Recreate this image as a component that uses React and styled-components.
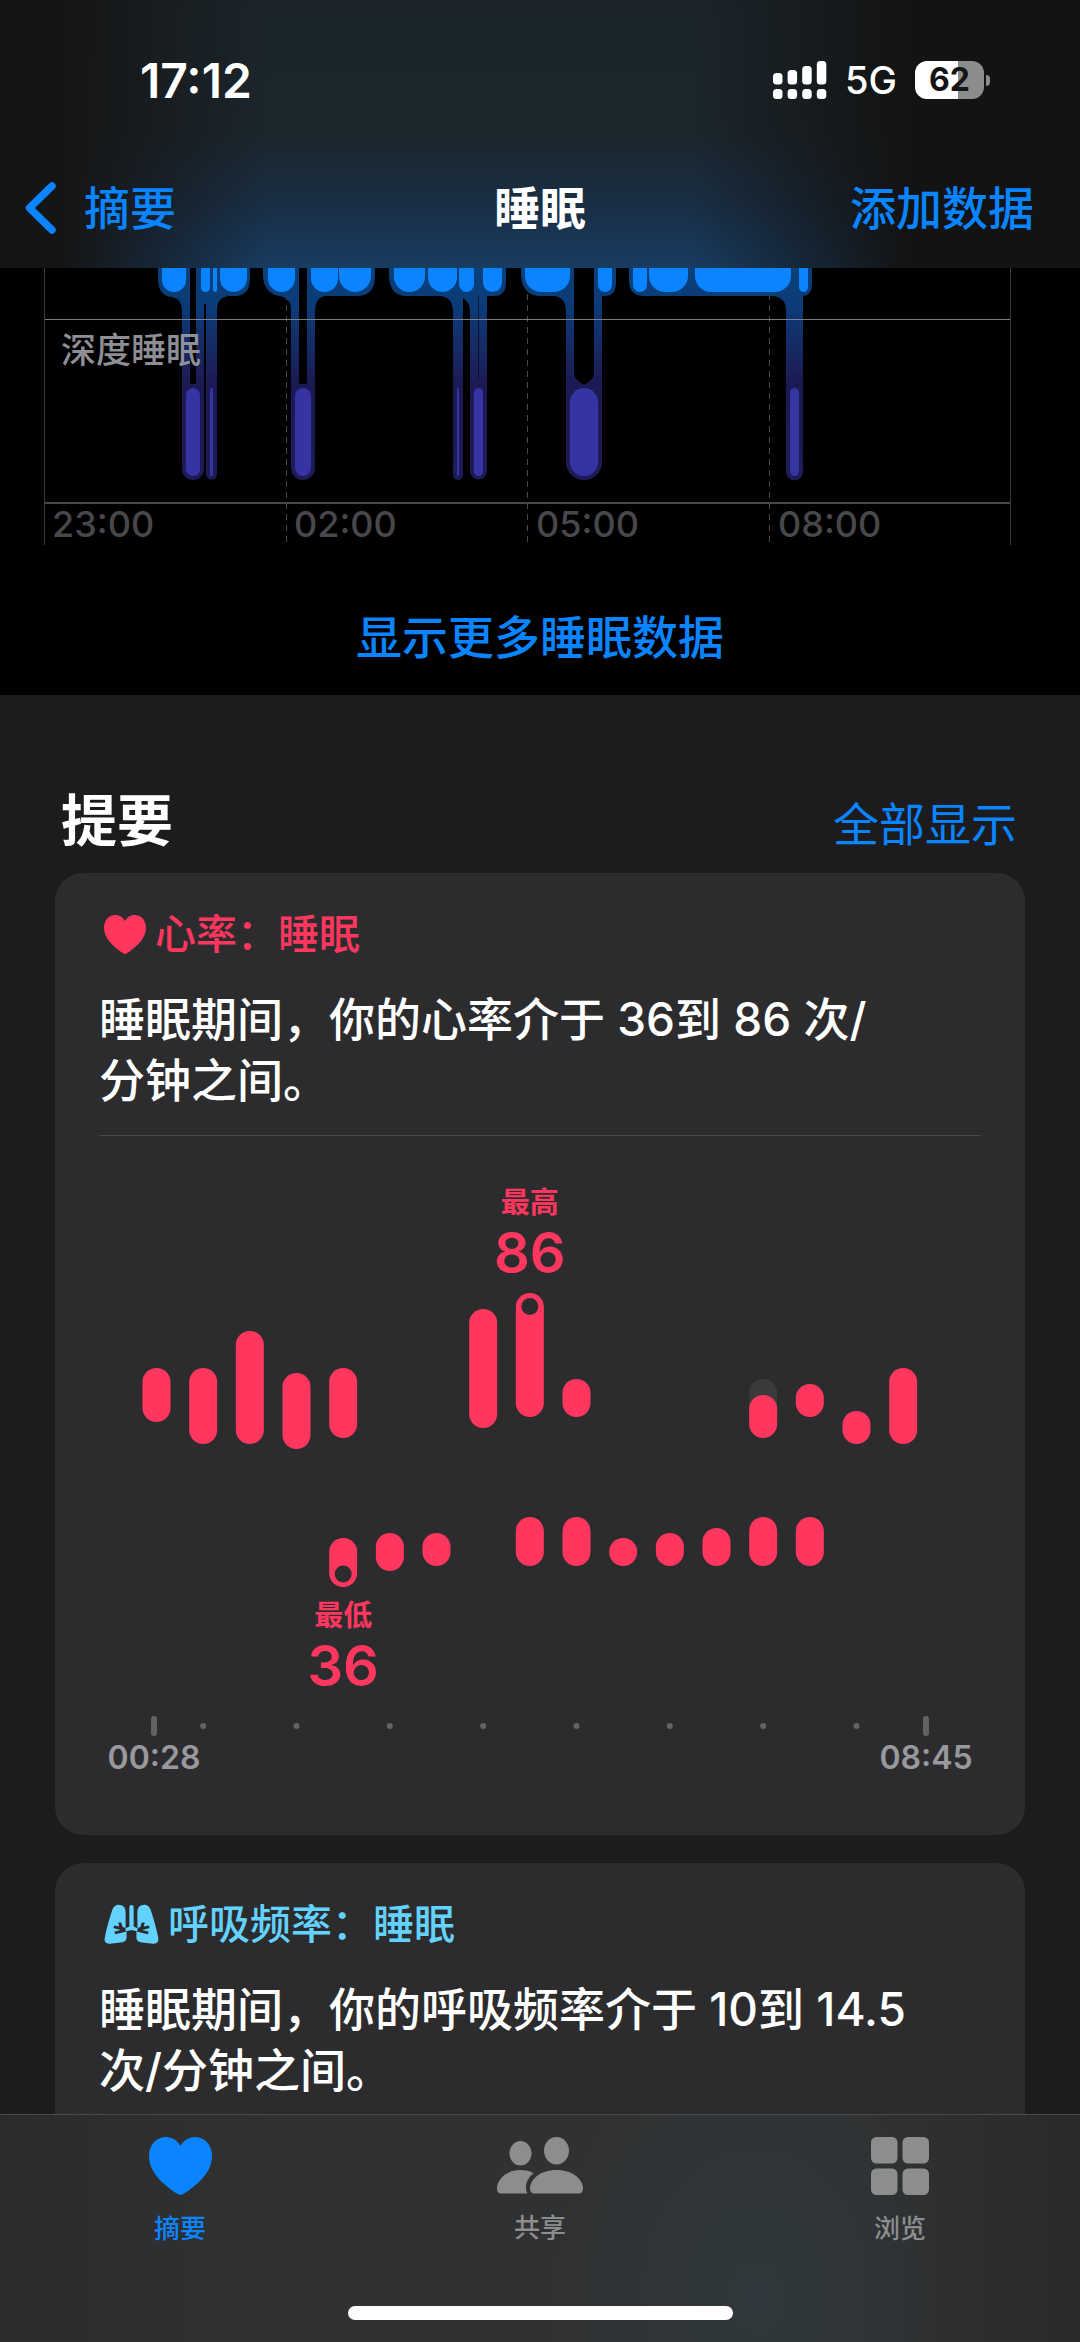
import React from "react";
import styled, { createGlobalStyle } from "styled-components";

const GlobalStyle = createGlobalStyle`
  :root {
    --blue: #0a84ff;
    --red: #ff375f;
    --cyan: #64d2ff;
    --sans: Inter, "Noto Sans CJK SC", sans-serif;
  }
  * {
    box-sizing: border-box;
  }
  body {
    margin: 0;
    background: #1c1c1e;
    color: #ffffff;
    font-family: var(--sans);
  }
  h1, h2, h3, p {
    margin: 0;
  }
  a {
    color: var(--blue);
    text-decoration: none;
  }
`;

const Screen = styled.div`
  min-height: 100vh;
  display: flex;
  flex-direction: column;
`;

/* top bars */

const Header = styled.header`
  background: linear-gradient(
      90deg,
      #141414 0%,
      #151515 6%,
      rgba(21, 21, 21, 0) 25%,
      rgba(20, 20, 20, 0) 64%,
      #131313 84%
    ),
    linear-gradient(180deg, #1b252b 0%, #1b262d 50%, #192e44 76%, #183c62 100%);
`;

const StatusBar = styled.div`
  height: 148px;
  padding: 12px 90px 0 140px;
  display: flex;
  align-items: center;
  justify-content: space-between;
`;

const Time = styled.span`
  font-size: 48px;
  font-weight: 600;
`;

const StatusIcons = styled.div`
  display: flex;
  align-items: center;
  gap: 18px;
  font-size: 38px;
  font-weight: 500;
`;

const Battery = styled.span`
  display: flex;
  align-items: center;
  gap: 2px;
  &::after {
    content: "";
    width: 4px;
    height: 11px;
    border-radius: 0 4px 4px 0;
    background: #8c8c8c;
  }
`;

const BatteryLevel = styled.span`
  width: 69px;
  height: 38px;
  border-radius: 12px;
  background: linear-gradient(90deg, #ffffff 62%, #8c8c8c 62%);
  color: #141414;
  font-size: 32px;
  line-height: 38px;
  font-weight: 700;
  text-align: center;
`;

const NavBar = styled.nav`
  height: 120px;
  padding: 0 24px;
  display: grid;
  grid-template-columns: 1fr auto 1fr;
  align-items: center;
  font-size: 46px;
  line-height: 60px;
  font-weight: 500;
`;

const BackLink = styled.a`
  display: flex;
  align-items: center;
  gap: 26px;
`;

const NavTitle = styled.h1`
  font-size: 46px;
  font-weight: 700;
`;

const NavAction = styled.a`
  justify-self: end;
  padding-right: 22px;
`;

/* sleep stages */

const SleepSection = styled.section`
  background: #000000;
  display: flex;
  flex-direction: column;
  align-items: center;
`;

const ChartSvg = styled.svg`
  display: block;
  width: 100%;
  height: auto;
  font-family: var(--sans);
`;

const MoreLink = styled.a`
  font-size: 46px;
  line-height: 60px;
  font-weight: 500;
  padding: 59px 0 28px;
`;

/* highlights */

const Highlights = styled.main`
  flex: 1;
  display: flex;
  flex-direction: column;
  gap: 28px;
  padding: 92px 55px 0;
`;

const SectionHead = styled.div`
  display: flex;
  align-items: baseline;
  justify-content: space-between;
  padding: 0 8px 0 6px;
  margin-bottom: -13px;
  line-height: 68px;
  h2 {
    font-size: 56px;
    font-weight: 700;
  }
  a {
    font-size: 46px;
  }
`;

const Card = styled.article`
  background: #2c2c2e;
  border-radius: ${(props) => (props.$open ? "28px 28px 0 0" : "28px")};
  flex-grow: ${(props) => (props.$open ? 1 : 0)};
  padding: 36px 44px 0;
`;

const CardTitle = styled.h3`
  display: flex;
  align-items: center;
  gap: 9px;
  padding-left: 5px;
  color: ${(props) => props.$color};
  font-size: 41px;
  line-height: 50px;
  font-weight: 500;
`;

const CardText = styled.p`
  margin-top: 30px;
  font-size: 46px;
  line-height: 61px;
  font-weight: 500;
`;

const Rule = styled.hr`
  border: 0;
  height: 1px;
  margin: 24px 0 0;
  background: #48484a;
`;

/* bottom tabs */

const TabBar = styled.footer`
  border-top: 1px solid #46484a;
  background: radial-gradient(
      ellipse 200px 260px at 70% 80%,
      #2f383c 0%,
      rgba(48, 49, 51, 0) 100%
    ),
    linear-gradient(90deg, #2b2b2b 0%, #303132 25%, #303132 80%, #2a2a2a 100%);
  display: flex;
  flex-direction: column;
  align-items: center;
  gap: 59px;
  padding: 22px 0;
`;

const Tabs = styled.nav`
  width: 100%;
  display: grid;
  grid-template-columns: repeat(3, 1fr);
`;

const Tab = styled.a`
  display: flex;
  flex-direction: column;
  align-items: center;
  gap: 16px;
  color: ${(props) => (props.$active ? "var(--blue)" : "#8c8d8d")};
  font-size: 26px;
  line-height: 36px;
  font-weight: 500;
`;

const HomeIndicator = styled.div`
  width: 385px;
  height: 14px;
  border-radius: 7px;
  background: #ffffff;
`;

/* icons */

function SignalIcon() {
  const bars = [12, 9, 5, 0];
  return (
    <svg width="54" height="38" viewBox="0 0 54 38" fill="#fff" aria-hidden="true">
      {bars.map((top, i) => (
        <g key={top}>
          <rect x={i * 14.6} y={top} width="9.5" height={23.5 - top} rx="3.5" />
          <rect x={i * 14.6} y="28" width="9.5" height="10" rx="3.5" />
        </g>
      ))}
    </svg>
  );
}

function ChevronIcon() {
  return (
    <svg width="34" height="54" viewBox="0 0 34 54" fill="none" aria-hidden="true">
      <path
        d="M28 5 L5.5 27 L28 49"
        stroke="currentColor"
        strokeWidth="7.5"
        strokeLinecap="round"
        strokeLinejoin="round"
      />
    </svg>
  );
}

function HeartIcon({ width, height }) {
  return (
    <svg
      width={width}
      height={height}
      viewBox="0 0 63 57"
      preserveAspectRatio="none"
      fill="currentColor"
      aria-hidden="true"
    >
      <path d="M31.5 57 C30.3 57 29.2 56.4 28 55.6 C11.5 45 0 33 0 18.8 C0 7.8 7.4 0 17 0 C23.4 0 28.6 3.4 31.5 8.8 C34.4 3.4 39.7 0 46 0 C55.6 0 63 7.8 63 18.8 C63 33 51.5 45 35 55.6 C33.8 56.4 32.7 57 31.5 57 Z" />
    </svg>
  );
}

function LungsIcon() {
  return (
    <svg width="55" height="40" viewBox="0 0 56 40" fill="currentColor" aria-hidden="true">
      <path d="M15 .5 C19.5 .5 22 3.5 22 8 V24 L19 23 L17.5 18.5 L14.5 18.5 L15.5 22.5 L10.5 21.5 L9.5 24 L17 26 L10.5 28 L11.5 30.5 L20 28.5 L23 27.5 V33 C23 37 21 38.3 17 38.8 L6 40 C2 40.3 0 38 .8 34 C2.2 26 5 16 8 7 C9.3 2.8 11.5 .5 15 .5 Z" />
      <path d="M41 .5 C36.5 .5 34 3.5 34 8 V24 L37 23 L38.5 18.5 L41.5 18.5 L40.5 22.5 L45.5 21.5 L46.5 24 L39 26 L45.5 28 L44.5 30.5 L36 28.5 L33 27.5 V33 C33 37 35 38.3 39 38.8 L50 40 C54 40.3 56 38 55.2 34 C53.8 26 51 16 48 7 C46.7 2.8 44.5 .5 41 .5 Z" />
      <path d="M25.8 3 C25.8 0 30.2 0 30.2 3 V22.5 L34.5 24.5 L33.5 27.5 L28 26 L22.5 27.5 L21.5 24.5 L25.8 22.5 Z" />
    </svg>
  );
}

function PeopleIcon() {
  return (
    <svg width="86" height="57" viewBox="0 0 86 57" fill="currentColor" aria-hidden="true">
      <ellipse cx="23.5" cy="16.3" rx="11" ry="12.2" />
      <ellipse cx="59.5" cy="13.7" rx="12.5" ry="13.7" />
      <path d="M5 56.5 C1.5 56.5 0 54.5 0 51.5 C0 43 8.5 33 23.5 33 C28.5 33 33 34.2 36.7 36.2 C29.5 41.5 27 50 30.5 56.5 Z" />
      <path d="M38 56.5 C34.5 56.5 33 54.5 33 51.5 C33 43 42.5 33 59.5 33 C76.5 33 86 43 86 51.5 C86 54.5 84.5 56.5 81 56.5 Z" />
    </svg>
  );
}

function GridIcon() {
  return (
    <svg width="58" height="58" viewBox="0 0 58 58" fill="currentColor" aria-hidden="true">
      <rect width="26.5" height="26.5" rx="5.5" />
      <rect x="31.5" width="26.5" height="26.5" rx="5.5" />
      <rect y="31.5" width="26.5" height="26.5" rx="5.5" />
      <rect x="31.5" y="31.5" width="26.5" height="26.5" rx="5.5" />
    </svg>
  );
}

/* charts */

// [left, right] of each stretch of core sleep
const coreSpans = [
  [162, 186],
  [201, 210],
  [213, 217],
  [220, 247],
  [268, 295],
  [311, 338],
  [339, 371],
  [394, 425],
  [428, 457],
  [459, 474],
  [483, 502],
  [525, 570],
  [598, 612],
  [633, 647],
  [649, 688],
  [695, 791],
  [799, 808],
];

const deepSpans = [
  [186, 200],
  [210, 213],
  [295, 311],
  [457, 459],
  [474, 483],
  [570, 598],
  [790, 799],
];

const hours = [
  { x: 44, label: "23:00" },
  { x: 286, label: "02:00" },
  { x: 528, label: "05:00" },
  { x: 770, label: "08:00" },
];

// flat top, rounded bottom
function corePath([left, right]) {
  const r = Math.min(16, (right - left) / 2);
  return `M${left} 0 V${24 - r} A${r} ${r} 0 0 0 ${left + r} 24 H${right - r} A${r} ${r} 0 0 0 ${right} ${24 - r} V0 Z`;
}

function SleepChart() {
  return (
    <ChartSvg viewBox="0 0 1080 280" role="img" aria-label="睡眠阶段">
      <defs>
        <linearGradient id="stage" gradientUnits="userSpaceOnUse" x1="0" y1="0" x2="0" y2="212">
          <stop offset="0" stopColor="#0b4078" />
          <stop offset="0.18" stopColor="#0b3b78" />
          <stop offset="0.35" stopColor="#152c66" />
          <stop offset="0.54" stopColor="#1c1a54" />
          <stop offset="1" stopColor="#1e1c58" />
        </linearGradient>
      </defs>

      <g stroke="#4a4a4c" strokeDasharray="6 5">
        <path d="M286.5 26 V277" />
        <path d="M527.5 26 V277" />
        <path d="M769.5 26 V277" />
      </g>

      <g fill="url(#stage)">
        <path d="M158 0 V10 Q158 28 172 29 Q182 31 182 42 V201 A11 11 0 0 0 204 201 V36 H206 V206 A5.5 5.5 0 0 0 217 206 V42 Q217 29 229 28 H236 Q250 27 250 10 V0 Z" />
        <path d="M263 0 V8 Q264 26 280 28 Q291 30 291 42 V200 A12 12 0 0 0 315 200 V44 Q315 28 327 28 H358 Q375 27 375 8 V0 Z" />
        <path d="M389 0 V8 Q390 28 406 28 H440 Q453 29 453 44 V207 A5 5 0 0 0 463 207 V30 Q470 34 470 44 V203 A8.5 8.5 0 0 0 487 203 V28 H494 Q506 28 506 14 V0 Z" />
        <path d="M521 0 V8 Q523 28 540 28 H554 Q566 29 566 44 V194 A18 18 0 0 0 602 194 V28 H605 Q616 28 616 14 V0 Z" />
        <path d="M629 0 V14 Q630 28 644 28 H774 Q786 30 786 42 V204 A8.5 8.5 0 0 0 803 204 V28 Q812 27 812 16 V0 Z" />
      </g>

      <g fill="#000">
        <rect x="190" y="0" width="6" height="116" />
        <rect x="299" y="0" width="8" height="116" />
        <path d="M574 0 H594 V107 Q592 112 588 114 Q584 119 580 114 Q576 112 574 107 Z" />
        <rect x="478" y="28" width="1" height="82" opacity="0.6" />
      </g>

      <g fill="#0a84ff">
        {coreSpans.map((span) => (
          <path key={span[0]} d={corePath(span)} />
        ))}
      </g>

      <g fill="#3634a3">
        {deepSpans.map(([left, right]) => (
          <rect
            key={left}
            x={left}
            y="120"
            width={right - left}
            height="88"
            rx={(right - left) / 2}
          />
        ))}
      </g>

      <path d="M44 51.5 H1011" stroke="#8a8a8c" opacity="0.9" />
      <path d="M44 235 H1011" stroke="#48484a" strokeWidth="2" />
      <path d="M44.5 0 V277 M1010.5 0 V277" stroke="#3a3a3c" />

      <text x="61" y="95" fontSize="35" fontWeight="500" fill="#98989f" fillOpacity="0.95">
        深度睡眠
      </text>
      <g fill="#48484a" fontSize="36" fontWeight="500">
        {hours.map((hour) => (
          <text key={hour.label} x={hour.x + 8} y="269">
            {hour.label}
          </text>
        ))}
      </g>
    </ChartSvg>
  );
}

// slot on the time axis, top and bottom of the bar
const heartBars = [
  [0, 232, 286],
  [1, 232, 308],
  [2, 195, 308],
  [3, 237, 313],
  [4, 232, 302],
  [4, 402, 451],
  [5, 397, 435],
  [6, 397, 430],
  [7, 173, 292],
  [8, 157, 281],
  [8, 381, 430],
  [9, 243, 281],
  [9, 381, 430],
  [10, 402, 430],
  [11, 397, 430],
  [12, 392, 430],
  [13, 259, 302],
  [13, 381, 430],
  [14, 248, 281],
  [14, 381, 430],
  [15, 275, 308],
  [16, 232, 308],
];

const slotX = (slot) => 57.5 + (slot * 140) / 3;

function HeartRateChart() {
  return (
    <ChartSvg viewBox="0 0 882 699" role="img" aria-label="心率范围">
      <rect x={slotX(13) - 14} y="243" width="28" height="50" rx="14" fill="#3a3a3c" />
      <g fill="#ff375f">
        {heartBars.map(([slot, top, bottom]) => (
          <rect
            key={`${slot}-${top}`}
            x={slotX(slot) - 14}
            y={top}
            width="28"
            height={bottom - top}
            rx="14"
          />
        ))}
      </g>
      <circle cx={slotX(8)} cy="170.5" r="8.5" fill="#2c2c2e" />
      <circle cx={slotX(4)} cy="438" r="8.5" fill="#2c2c2e" />

      <g fill="#ff375f" textAnchor="middle">
        <text x={slotX(8)} y="77" fontSize="29" fontWeight="700">
          最高
        </text>
        <text x={slotX(8)} y="137" fontSize="56" fontWeight="600">
          86
        </text>
        <text x={slotX(4)} y="490" fontSize="29" fontWeight="700">
          最低
        </text>
        <text x={slotX(4)} y="550" fontSize="56" fontWeight="600">
          36
        </text>
      </g>

      <g fill="#636366">
        <rect x="52" y="580" width="6" height="20" rx="3" />
        <rect x="824" y="580" width="6" height="20" rx="3" />
        {[1, 3, 5, 7, 9, 11, 13, 15].map((slot) => (
          <circle key={slot} cx={slotX(slot)} cy="590" r="3" />
        ))}
      </g>
      <g fill="#98989d" fontSize="32" fontWeight="600" textAnchor="middle">
        <text x="55" y="633">
          00:28
        </text>
        <text x="827" y="633">
          08:45
        </text>
      </g>
    </ChartSvg>
  );
}

const tabs = [
  { text: "摘要", icon: <HeartIcon width={63} height={58} />, active: true },
  { text: "共享", icon: <PeopleIcon /> },
  { text: "浏览", icon: <GridIcon /> },
];

export default function App() {
  return (
    <Screen>
      <GlobalStyle />
      <Header>
        <StatusBar>
          <Time>17:12</Time>
          <StatusIcons>
            <SignalIcon />
            <span>5G</span>
            <Battery>
              <BatteryLevel>62</BatteryLevel>
            </Battery>
          </StatusIcons>
        </StatusBar>
        <NavBar>
          <BackLink href="#summary">
            <ChevronIcon />
            摘要
          </BackLink>
          <NavTitle>睡眠</NavTitle>
          <NavAction href="#add">添加数据</NavAction>
        </NavBar>
      </Header>

      <SleepSection>
        <SleepChart />
        <MoreLink href="#more">显示更多睡眠数据</MoreLink>
      </SleepSection>

      <Highlights>
        <SectionHead>
          <h2>提要</h2>
          <a href="#all">全部显示</a>
        </SectionHead>

        <Card>
          <CardTitle $color="var(--red)">
            <HeartIcon width={42} height={39} />
            心率：睡眠
          </CardTitle>
          <CardText>
            睡眠期间，你的心率介于 36到 86 次/
            <br />
            分钟之间。
          </CardText>
          <Rule />
          <HeartRateChart />
        </Card>

        <Card $open>
          <CardTitle $color="var(--cyan)">
            <LungsIcon />
            呼吸频率：睡眠
          </CardTitle>
          <CardText>
            睡眠期间，你的呼吸频率介于 10到 14.5
            <br />
            次/分钟之间。
          </CardText>
        </Card>
      </Highlights>

      <TabBar>
        <Tabs>
          {tabs.map((tab) => (
            <Tab key={tab.text} href="#" $active={tab.active}>
              {tab.icon}
              {tab.text}
            </Tab>
          ))}
        </Tabs>
        <HomeIndicator />
      </TabBar>
    </Screen>
  );
}
